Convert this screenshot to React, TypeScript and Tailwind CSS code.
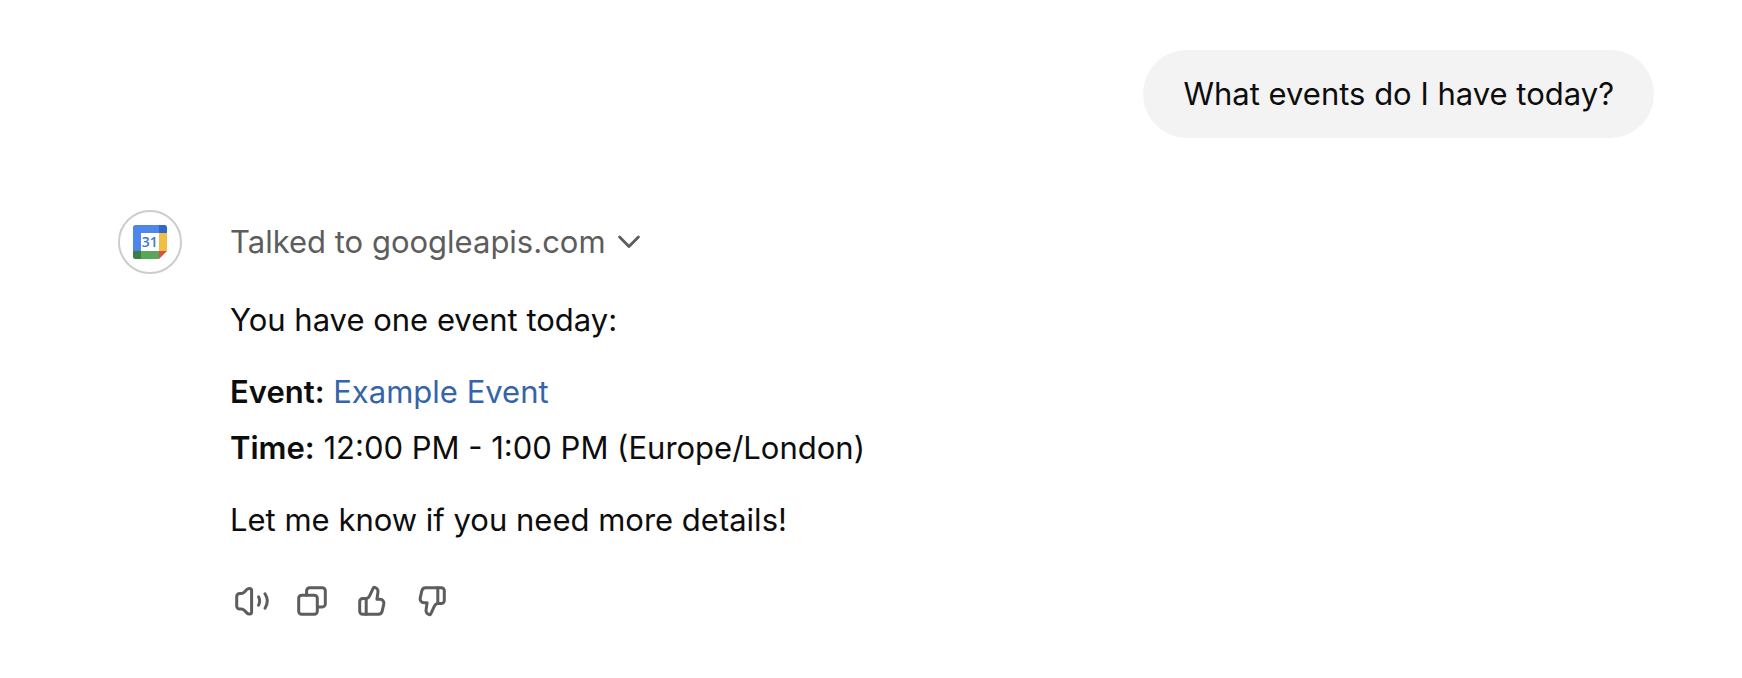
import type { ReactNode } from "react";

function CalendarLogo() {
  return (
    <svg viewBox="0 0 34 34" className="size-[34px]" role="img" aria-label="Google Calendar">
      <path d="M2.5 0H26v8H8v18H0V2.5A2.5 2.5 0 0 1 2.5 0Z" fill="#4f86ec" />
      <path d="M26 0h5.5A2.5 2.5 0 0 1 34 2.5V8h-8Z" fill="#3266c8" />
      <path d="M26 8h8v18h-8Z" fill="#f0be42" />
      <path d="M8 26h18v8H8Z" fill="#58a65c" />
      <path d="M0 26h8v8H2.5A2.5 2.5 0 0 1 0 31.5Z" fill="#3b8042" />
      <path d="M26 26h8l-8 8Z" fill="#d95040" />
      <path d="M8 8h18v18H8Z" fill="#fff" />
      <text
        x="16.8"
        y="22.4"
        textAnchor="middle"
        fontSize="14"
        fontWeight="600"
        fill="#3b75dd"
        className="font-['Open_Sans',sans-serif]"
      >
        31
      </text>
    </svg>
  );
}

function Icon({ children }: { children: ReactNode }) {
  return (
    <svg
      viewBox="0 0 36 36"
      className="size-9"
      fill="none"
      stroke="currentColor"
      strokeWidth="3"
      strokeLinecap="round"
      strokeLinejoin="round"
      aria-hidden="true"
    >
      {children}
    </svg>
  );
}

function ThumbPaths() {
  return (
    <>
      <path d="M12.2 15.5H8.7a3 3 0 0 0-3 3v9.8a3 3 0 0 0 3 3h15.6a4 4 0 0 0 3.9-3.1l1.6-7.3a3.8 3.8 0 0 0-3.7-4.600h-3.200l1-6.800a4 4 0 0 0-2.600-4.800l-.5-.2a1.300 1.300 0 0 0-1.600.7l-3.700 8a4 4 0 0 1-3.300 2.300Z" />
      <path d="M12.2 15.5v15.8" />
    </>
  );
}

const actions: { label: string; icon: ReactNode }[] = [
  {
    label: "Read aloud",
    icon: (
      <>
        <path d="M5.700 10.400h1.600a4 4 0 0 0 2.900-1.200l2.600-2.700a3.500 3.500 0 0 1 2.500-1.100h.3a2 2 0 0 1 2 2v21.600a2 2 0 0 1-2 2h-.3a3.500 3.500 0 0 1-2.500-1.100l-2.600-2.700A4 4 0 0 0 7.300 26H5.700a3 3 0 0 1-3-3v-9.600a3 3 0 0 1 3-3Z" />
        <path d="M24.6 13.8c1.3 2.6 1.3 5.8 0 8.4M31 10.8c2.8 4.4 2.8 10 0 14.4" />
      </>
    ),
  },
  {
    label: "Copy",
    icon: (
      <>
        <rect x="4.7" y="12.2" width="18.6" height="19.1" rx="3" />
        <path d="M12.6 12V7.7a3 3 0 0 1 3-3h12.700a3 3 0 0 1 3 3v13.200a3 3 0 0 1-3 3h-4.800" />
      </>
    ),
  },
  { label: "Good response", icon: <ThumbPaths /> },
  {
    label: "Bad response",
    icon: (
      <g transform="rotate(180 18 18)">
        <ThumbPaths />
      </g>
    ),
  },
];

export default function App() {
  return (
    <main className="flex flex-col gap-[72px] bg-white pt-[50px] pr-[88px] pb-10 pl-[118px] font-['Inter','Liberation_Sans',sans-serif] text-[31px] leading-14 text-[#0d0d0d]">
      <div className="flex justify-end">
        <p className="rounded-full bg-[#f3f3f3] px-10 py-4">What events do I have today?</p>
      </div>

      <article className="flex items-start gap-12">
        <div className="flex size-16 shrink-0 items-center justify-center rounded-full border-2 border-[#cdcdcd]">
          <CalendarLogo />
        </div>

        <div className="flex min-w-0 flex-1 flex-col">
          <button
            type="button"
            aria-expanded="false"
            className="mt-1 mb-[22px] flex cursor-pointer items-center gap-3 self-start text-[#5d5d5d]"
          >
            Talked to googleapis.com
            <svg
              viewBox="0 0 22 14"
              className="h-3.5 w-[22px]"
              fill="none"
              stroke="currentColor"
              strokeWidth="2.8"
              strokeLinecap="round"
              strokeLinejoin="round"
              aria-hidden="true"
            >
              <path d="M1.6 2 11 11.6 20.4 2" />
            </svg>
          </button>

          <div className="flex flex-col gap-4">
            <p>You have one event today:</p>
            <p>
              <strong className="font-semibold">Event:</strong>{" "}
              <a href="#event" className="text-[#3664a9]">
                Example Event
              </a>
              <br />
              <strong className="font-semibold">Time:</strong> 12:00 PM - 1:00 PM (Europe/London)
            </p>
            <p>Let me know if you need more details!</p>
          </div>

          <div className="mt-[23px] -ml-2 flex text-[#5d5d5d]">
            {actions.map(({ label, icon }) => (
              <button
                key={label}
                type="button"
                aria-label={label}
                className="flex size-15 cursor-pointer items-center justify-center"
              >
                <Icon>{icon}</Icon>
              </button>
            ))}
          </div>
        </div>
      </article>
    </main>
  );
}
